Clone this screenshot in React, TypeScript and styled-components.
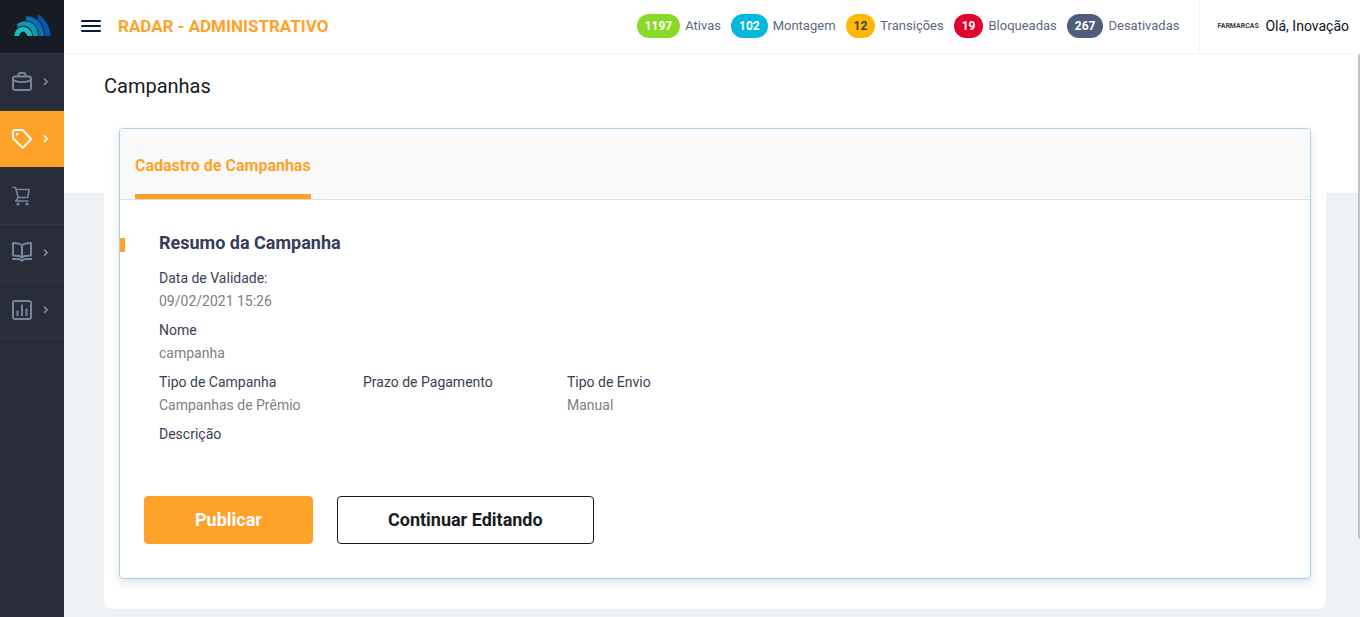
import React from "react";
import styled, { createGlobalStyle } from "styled-components";

const GlobalStyle = createGlobalStyle`
  *, *::before, *::after { box-sizing: border-box; }
  body {
    margin: 0;
    font-family: Roboto, "Liberation Sans", sans-serif;
    color: #181c21;
    background: #eef2f5;
  }
  h1, h2, h3, p, dl, dd, ul { margin: 0; padding: 0; }
`;

const Shell = styled.div`
  display: flex;
  min-height: 100vh;
`;

const Sidebar = styled.nav`
  flex: none;
  width: 64px;
  background: #272c38;
`;

const Brand = styled.a`
  display: flex;
  align-items: center;
  justify-content: center;
  height: 54px;
  padding-bottom: 3px;
  background: #171b23;
  border-bottom: 1px solid #2f3540;
`;

const NavItem = styled.a<{ $active?: boolean }>`
  display: flex;
  align-items: center;
  gap: 8px;
  height: 57px;
  padding-left: 10px;
  color: ${(p) => (p.$active ? "#fff" : "#76859c")};
  background: ${(p) => (p.$active ? "#ffa229" : "transparent")};
  border-bottom: 1px solid ${(p) => (p.$active ? "#272c38" : "#303643")};
`;

const Page = styled.div`
  flex: 1;
  min-width: 0;
  display: flex;
  flex-direction: column;
`;

const Header = styled.header`
  display: flex;
  align-items: stretch;
  height: 54px;
  background: #fff;
  border-bottom: 1px solid #f2f3f4;
`;

const HeaderMain = styled.div`
  flex: 1;
  display: flex;
  align-items: center;
  padding-bottom: 2px;
`;

const MenuButton = styled.button`
  display: flex;
  flex-direction: column;
  gap: 3px;
  width: 20px;
  margin: 0 17px;
  padding: 0;
  border: 0;
  background: none;
`;

const MenuBar = styled.span`
  height: 2px;
  border-radius: 1px;
  background: #051b40;
`;

const AppTitle = styled.h1`
  flex: 1;
  font-size: 17px;
  line-height: 24px;
  font-weight: 700;
  color: #ffa229;
  white-space: nowrap;
`;

const Stats = styled.ul`
  display: flex;
  gap: 10px;
  padding-right: 20px;
  list-style: none;
`;

const Stat = styled.li`
  display: flex;
  align-items: center;
  gap: 5px;
  font-size: 13px;
  line-height: 24px;
  color: #5b6880;
  white-space: nowrap;
`;

const Badge = styled.span<{ $bg: string; $fg?: string }>`
  padding: 0 8px;
  border-radius: 12px;
  background: ${(p) => p.$bg};
  color: ${(p) => p.$fg ?? "#fff"};
  font-size: 12px;
  font-weight: 700;
`;

const User = styled.div`
  display: flex;
  align-items: center;
  gap: 8px;
  padding: 0 11px 2px 17px;
  border-left: 1px solid #f2f3f4;
  font-size: 14px;
  line-height: 24px;
  color: #0c1222;
  white-space: nowrap;
`;

const CompanyLogo = styled.span`
  width: 40px;
  font-size: 7px;
  font-weight: 700;
  color: #3b3b3b;
`;

const Main = styled.main`
  flex: 1;
  padding: 0 34px 8px 40px;
  background: linear-gradient(#fff 139px, #eef2f5 139px);
`;

const PageTitle = styled.h2`
  padding: 20px 0;
  font-size: 20px;
  line-height: 24px;
  font-weight: 400;
`;

const Surface = styled.section`
  padding: 10px 15px 30px;
  border-radius: 8px;
  background: #fff;
`;

const Card = styled.div`
  overflow: hidden;
  border: 1px solid #afd1e8;
  border-radius: 4px;
  background: #fff;
  box-shadow: 0 4px 10px rgba(40, 60, 70, 0.14);
`;

const Tabs = styled.div`
  display: flex;
  padding: 0 15px;
  background: #f9f9f9;
  border-bottom: 1px solid #dee0e2;
`;

const Tab = styled.button`
  height: 70px;
  padding: 8px 0 0;
  border: 0;
  border-bottom: 5px solid #ffa229;
  background: none;
  font: 700 16px/24px Roboto, "Liberation Sans", sans-serif;
  color: #ffa229;
`;

const SummaryHeading = styled.div`
  display: flex;
  align-items: center;
  gap: 34px;
  padding-top: 31px;
`;

const Marker = styled.span`
  width: 5px;
  height: 14px;
  margin-top: 4px;
  background: #ffa229;
`;

const SummaryTitle = styled.h3`
  font-size: 18px;
  line-height: 24px;
  font-weight: 700;
  color: #363c5a;
`;

const Fields = styled.div`
  display: grid;
  gap: 6px;
  padding: 12px 39px 0;
`;

const FieldRow = styled.dl`
  display: grid;
  grid-template-columns: repeat(3, minmax(0, 204px));
`;

const Term = styled.dt`
  font-size: 14px;
  line-height: 23px;
  color: #3a3f55;
`;

const Value = styled.dd`
  font-size: 14px;
  line-height: 23px;
  color: #808080;
`;

const Actions = styled.div`
  display: flex;
  gap: 24px;
  padding: 50px 24px 34px;
`;

const Button = styled.button<{ $primary?: boolean }>`
  height: 48px;
  padding: 0 50px;
  border: 1px solid ${(p) => (p.$primary ? "#ffa229" : "#181c21")};
  border-radius: 4px;
  background: ${(p) => (p.$primary ? "#ffa229" : "#fff")};
  color: ${(p) => (p.$primary ? "#fff" : "#181c21")};
  font: 700 18px/24px Roboto, "Liberation Sans", sans-serif;
`;

const ScrollThumb = styled.div`
  position: absolute;
  top: 54px;
  right: 0;
  width: 2px;
  height: 485px;
  border-radius: 2px 0 0 2px;
  background: #c1c3c5;
`;

const BrandLogo = () => (
  <svg width="37" height="22" viewBox="1 1 37 22" aria-hidden="true" stroke="#171b23" strokeWidth="0.6">
    <path d="M24.500 1C31 4 38 13 38 23.500H31.500C31.500 16 29 10 24.500 7Z" fill="#0756a3" />
    <path d="M12.500 3C23 2.500 31.500 11 31.500 23.500H25.500C25.500 14 20.500 8.500 12.500 8Z" fill="#0a6fbe" />
    <path d="M3.500 11.500C6 9 9 8 12.500 8C20 8.500 25.500 14 25.500 23.500H19.500C19.500 16.500 15 13 10.500 13C8 13 6.500 14 5 15Z" fill="#0c9bb3" />
    <path d="M1 23.500C1 18 5 13.500 10 13.500C15 13.500 19.500 18 19.500 23.500H14C14 21 12 19 10 19C8 19 6.500 21 6.500 23.500Z" fill="#1cb9be" />
  </svg>
);

const Icon = ({ children }: { children: React.ReactNode }) => (
  <svg width="24" height="24" viewBox="0 0 24 24" fill="none" stroke="currentColor" strokeWidth="2" strokeLinejoin="round" aria-hidden="true">
    {children}
  </svg>
);

const Chevron = () => (
  <svg width="8" height="10" viewBox="0 0 8 10" fill="none" stroke="currentColor" strokeWidth="1.700" aria-hidden="true">
    <path d="M2 1.500L5.200 4.700L2 7.900" />
  </svg>
);

const navItems = [
  {
    label: "Negócios",
    more: true,
    icon: (
      <>
        <rect x="3" y="6.500" width="18" height="13.500" rx="2" />
        <path d="M8.500 6.500V5a2 2 0 0 1 2-2h3a2 2 0 0 1 2 2V6.500" />
        <path d="M3 10c2 1.500 5 2 9 2s7-.5 9-2" />
      </>
    ),
  },
  {
    label: "Campanhas",
    more: true,
    active: true,
    icon: (
      <>
        <path d="M5 3h7.700L21.200 12.200L12.800 20.900L3 11.200V5a2 2 0 0 1 2-2Z" />
        <circle cx="7.200" cy="7.200" r="1.300" fill="currentColor" stroke="none" />
      </>
    ),
  },
  {
    label: "Pedidos",
    icon: (
      <g strokeWidth="1.600">
        <path d="M2.500 3.500h3L8.300 13.500" />
        <path d="M6.200 5.500H19.300L17.600 13.500H8L5.800 17H18.500" />
        <circle cx="8" cy="20" r="1.600" fill="currentColor" stroke="none" />
        <circle cx="17" cy="20" r="1.600" fill="currentColor" stroke="none" />
      </g>
    ),
  },
  {
    label: "Catálogo",
    more: true,
    icon: (
      <>
        <path d="M12 4.500C10.500 2.500 8 2 3 2V14.500C7.500 14.500 10.500 14.800 12 16.500C13.500 14.800 16.500 14.500 21 14.500V2C16 2 13.500 2.500 12 4.500ZM12 4.500V16.500" />
        <path d="M2 18H8C10 18 11 18.600 12 19.800C13 18.600 14 18 16 18H22" />
      </>
    ),
  },
  {
    label: "Relatórios",
    more: true,
    icon: (
      <>
        <rect x="3" y="3" width="18" height="18" rx="2" />
        <path d="M7.500 12.500V18M12 6.500V18M16.500 10.500V18" />
      </>
    ),
  },
];

const stats = [
  { count: 1197, label: "Ativas", bg: "#87da26" },
  { count: 102, label: "Montagem", bg: "#02b8dc" },
  { count: 12, label: "Transições", bg: "#ffb703", fg: "#3d4148" },
  { count: 19, label: "Bloqueadas", bg: "#e1052d" },
  { count: 267, label: "Desativadas", bg: "#4f5f7b" },
];

const Field = ({ term, value }: { term: string; value?: string }) => (
  <div>
    <Term>{term}</Term>
    {value && <Value>{value}</Value>}
  </div>
);

export default function App() {
  return (
    <>
      <GlobalStyle />
      <Shell>
        <Sidebar>
          <Brand href="#" aria-label="Radar">
            <BrandLogo />
          </Brand>
          {navItems.map((item) => (
            <NavItem key={item.label} href="#" aria-label={item.label} $active={item.active}>
              <Icon>{item.icon}</Icon>
              {item.more && <Chevron />}
            </NavItem>
          ))}
        </Sidebar>
        <Page>
          <Header>
            <HeaderMain>
              <MenuButton aria-label="Menu">
                <MenuBar />
                <MenuBar />
                <MenuBar />
              </MenuButton>
              <AppTitle>RADAR - ADMINISTRATIVO</AppTitle>
              <Stats>
                {stats.map((s) => (
                  <Stat key={s.label}>
                    <Badge $bg={s.bg} $fg={s.fg}>{s.count}</Badge>
                    {s.label}
                  </Stat>
                ))}
              </Stats>
            </HeaderMain>
            <User>
              <CompanyLogo>FARMARCAS</CompanyLogo>
              Olá, Inovação
            </User>
          </Header>
          <Main>
            <PageTitle>Campanhas</PageTitle>
            <Surface>
              <Card>
                <Tabs>
                  <Tab>Cadastro de Campanhas</Tab>
                </Tabs>
                <SummaryHeading>
                  <Marker />
                  <SummaryTitle>Resumo da Campanha</SummaryTitle>
                </SummaryHeading>
                <Fields>
                  <dl><Field term="Data de Validade:" value="09/02/2021 15:26" /></dl>
                  <dl><Field term="Nome" value="campanha" /></dl>
                  <FieldRow>
                    <Field term="Tipo de Campanha" value="Campanhas de Prêmio" />
                    <Field term="Prazo de Pagamento" />
                    <Field term="Tipo de Envio" value="Manual" />
                  </FieldRow>
                  <dl><Field term="Descrição" /></dl>
                </Fields>
                <Actions>
                  <Button $primary>Publicar</Button>
                  <Button>Continuar Editando</Button>
                </Actions>
              </Card>
            </Surface>
          </Main>
        </Page>
      </Shell>
      <ScrollThumb />
    </>
  );
}
